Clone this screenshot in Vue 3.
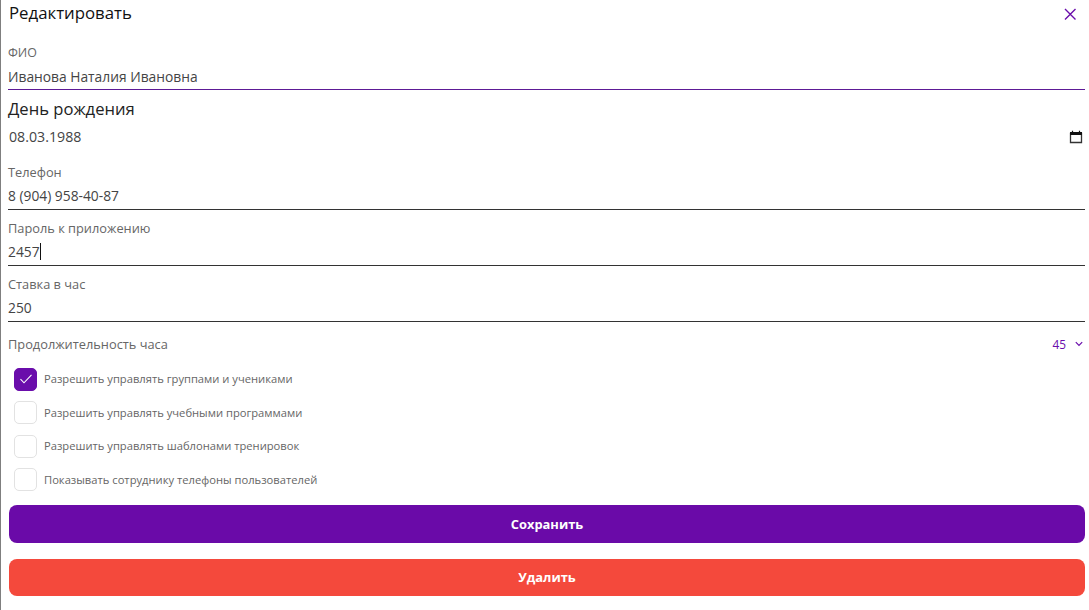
<script setup>
const fields1 = [
  { label: 'Телефон', value: '8 (904) 958-40-87' },
  { label: 'Пароль к приложению', value: '2457', caret: true },
  { label: 'Ставка в час', value: '250' }
]
const checks = [
  { text: 'Разрешить управлять группами и учениками', on: true },
  { text: 'Разрешить управлять учебными программами', on: false },
  { text: 'Разрешить управлять шаблонами тренировок', on: false },
  { text: 'Показывать сотруднику телефоны пользователей', on: false }
]
</script>

<template>
  <div class="page">
    <header class="head">
      <h1>Редактировать</h1>
      <svg class="close" width="14" height="14" viewBox="0 0 14 14"><path d="M2 2L12.5 12.5M12.5 2L2 12.5" stroke="#6a0dab" stroke-width="1.4" fill="none"/></svg>
    </header>
    <div class="field first">
      <label>ФИО</label>
      <div class="value">Иванова Наталия Ивановна</div>
    </div>
    <h2>День рождения</h2>
    <div class="date">
      <span>08.03.1988</span>
      <svg width="14" height="14" viewBox="0 0 14 14"><path d="M1.5 3.5h11v9h-11z" fill="none" stroke="#333" stroke-width="1.3"/><path d="M1 2h12v3H1z" fill="#111"/><path d="M3.5 .8v2M10.5 .8v2" stroke="#111" stroke-width="1.2"/></svg>
    </div>
    <div v-for="f in fields1" :key="f.label" class="field">
      <label>{{ f.label }}</label>
      <div class="value">{{ f.value }}<i v-if="f.caret" class="caret"></i></div>
    </div>
    <div class="duration">
      <span>Продолжительность часа</span>
      <span class="select">45
        <svg width="8" height="6" viewBox="0 0 8 6"><path d="M.8 1.2L4 4.4l3.2-3.2" fill="none" stroke="#6a0dab" stroke-width="1.2"/></svg>
      </span>
    </div>
    <div class="checks">
      <div v-for="c in checks" :key="c.text" class="check">
        <span class="box" :class="{ on: c.on }">
          <svg v-if="c.on" width="14" height="12" viewBox="0 0 14 12"><path d="M1.5 6.2L5 9.8l7.5-8" fill="none" stroke="#fff" stroke-width="1.1"/></svg>
        </span>
        <span class="check-text">{{ c.text }}</span>
      </div>
    </div>
    <button class="btn save">Сохранить</button>
    <button class="btn del">Удалить</button>
  </div>
</template>

<style>
html, body { margin: 0; background: #fff; }
</style>

<style scoped>
.page {
  box-sizing: border-box;
  width: 1089px;
  height: 610px;
  overflow: hidden;
  border-left: 1px solid #7f7f7f;
  padding: 0 4px 0 7px;
  font-family: "Open Sans", "Noto Sans", sans-serif;
  color: #3c3c3c;
  display: flex;
  flex-direction: column;
}
.head {
  height: 27px;
  display: flex;
  justify-content: space-between;
  align-items: center;
  padding-left: 1px;
}
h1 {
  margin: 0 0 2px;
  font-size: 16.8px;
  font-weight: 500;
  color: #111;
}
.close { margin-right: 8px; margin-top: 1px; }
.field {
  height: 56px;
  box-sizing: border-box;
  border-bottom: 1px solid #333;
  display: flex;
  flex-direction: column;
  justify-content: flex-end;
  padding-bottom: 4px;
}
.field.first { height: 63px; border-bottom-color: #5d1a96; padding-bottom: 3px; }
label {
  font-size: 12.8px;
  line-height: 16px;
  color: #666;
  margin-bottom: 5px;
}
.field.first label { font-size: 12.4px; }
.value {
  font-size: 13.8px;
  line-height: 19px;
  height: 20px;
  color: #444;
  display: flex;
  align-items: center;
}
.caret { display: inline-block; width: 1px; height: 17px; background: #111; }
h2 {
  margin: 8px 0 0;
  font-size: 16.6px;
  line-height: 22px;
  font-weight: 500;
  color: #222;
}
.date {
  height: 34px;
  box-sizing: border-box;
  padding: 0 2px 2px 1px;
  display: flex;
  justify-content: space-between;
  align-items: center;
  font-size: 14.2px;
  color: #444;
}
.date svg { margin-top: 2px; }
.duration {
  height: 46px;
  box-sizing: border-box;
  padding-bottom: 2px;
  display: flex;
  justify-content: space-between;
  align-items: center;
  font-size: 12.8px;
  color: #666;
}
.select {
  font-size: 11.8px;
  color: #6a0dab;
  display: flex;
  align-items: center;
  gap: 9px;
  padding-right: 2px;
}
.checks { display: flex; flex-direction: column; gap: 11.5px; padding-left: 6px; }
.check {
  display: flex;
  align-items: center;
  gap: 7px;
  font-size: 11.2px;
  color: #666;
  height: 22px;
}
.check-text { padding-bottom: 1px; }
.box {
  box-sizing: border-box;
  width: 23px;
  height: 23px;
  border: 1px solid #e2e2e2;
  border-radius: 5px;
  display: flex;
  align-items: center;
  justify-content: center;
  flex: none;
}
.box.on { background: #6a0dab; border-color: #6a0dab; }
.btn {
  border: 0;
  border-radius: 8px;
  color: #fff;
  font: 700 12.9px "Open Sans", "Noto Sans", sans-serif;
  margin-left: 1px;
  width: 1076px;
  flex: none;
}
.save { height: 38px; background: #6a0aa8; margin-top: 14px; }
.del { height: 37px; background: #f4493c; margin-top: 16px; }
</style>
